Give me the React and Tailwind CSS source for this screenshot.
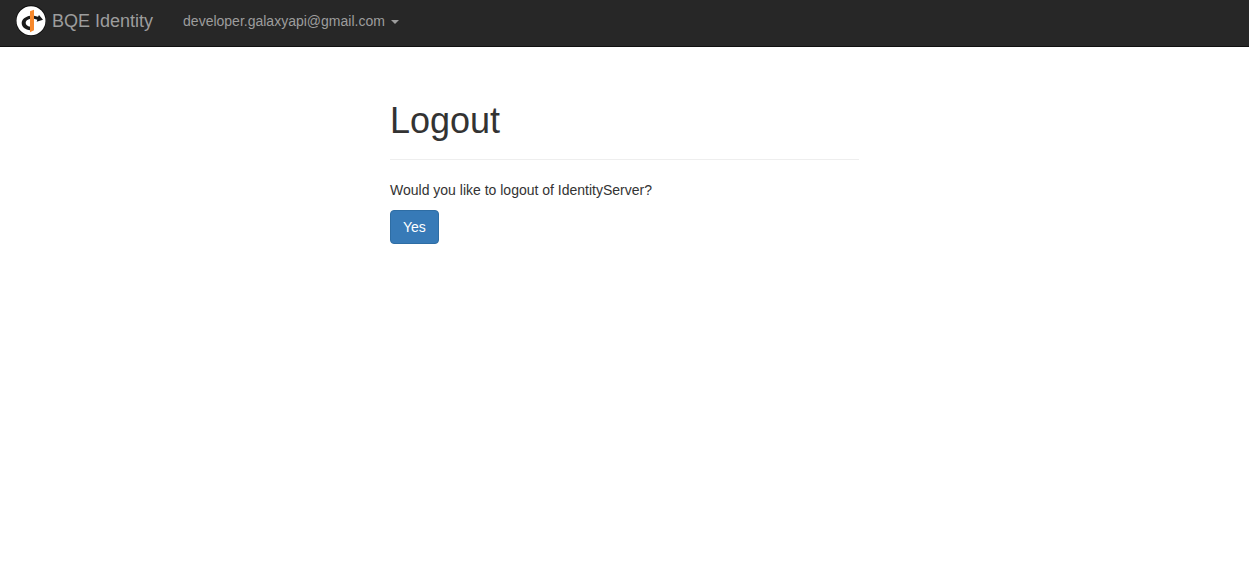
function Logo() {
  return (
    <svg className="h-8 w-[30px] shrink-0" viewBox="0 0 90 96" aria-hidden="true">
      <circle cx="45" cy="47" r="46" fill="#0b0b0b" />
      <circle cx="45" cy="47" r="43.5" fill="#fff" />
      <path d="M43 32 C28 34 17 43 17 54 C17 66 28 74 43 76 L43 65 C34 63 29 59 29 53 C29 47 34 43 43 41 Z" fill="#1a1a1a" />
      <path d="M54 32 L66 35 L69 30 L81 44 L62 50 L64 44 L54 41 Z" fill="#1a1a1a" />
      <path d="M42 19 L54 14 L54 76 L42 82 Z" fill="#f7882b" />
    </svg>
  );
}

export default function App() {
  return (
    <div className="min-h-screen bg-white font-['Liberation_Sans',Arial,sans-serif] text-sm leading-5 text-[#333]">
      <nav className="flex h-[47px] items-start border-b border-[#101010] bg-[#272727] px-4 text-[#9d9d9d]">
        <a href="#" className="flex items-center gap-1.5 pt-[5px] text-lg leading-8">
          <Logo />
          <span>BQE Identity</span>
        </a>
        <button type="button" aria-haspopup="menu" className="ml-[30px] flex items-center gap-1.5 pt-[11px]">
          <span>developer.galaxyapi@gmail.com</span>
          <svg className="mt-0.5 h-1 w-2" viewBox="0 0 8 4" aria-hidden="true">
            <path d="M0 0H8L4 4Z" fill="currentColor" />
          </svg>
        </button>
      </nav>
      <main className="mx-auto max-w-[469px] pt-[54px]">
        <h1 className="border-b border-[#eee] pb-[18px] text-4xl leading-10">Logout</h1>
        <form className="pt-5" onSubmit={(e) => e.preventDefault()}>
          <p className="mb-2.5">Would you like to logout of IdentityServer?</p>
          <button type="submit" className="rounded border border-[#2e6da4] bg-[#377ab7] px-3 py-1.5 text-white">
            Yes
          </button>
        </form>
      </main>
    </div>
  );
}
